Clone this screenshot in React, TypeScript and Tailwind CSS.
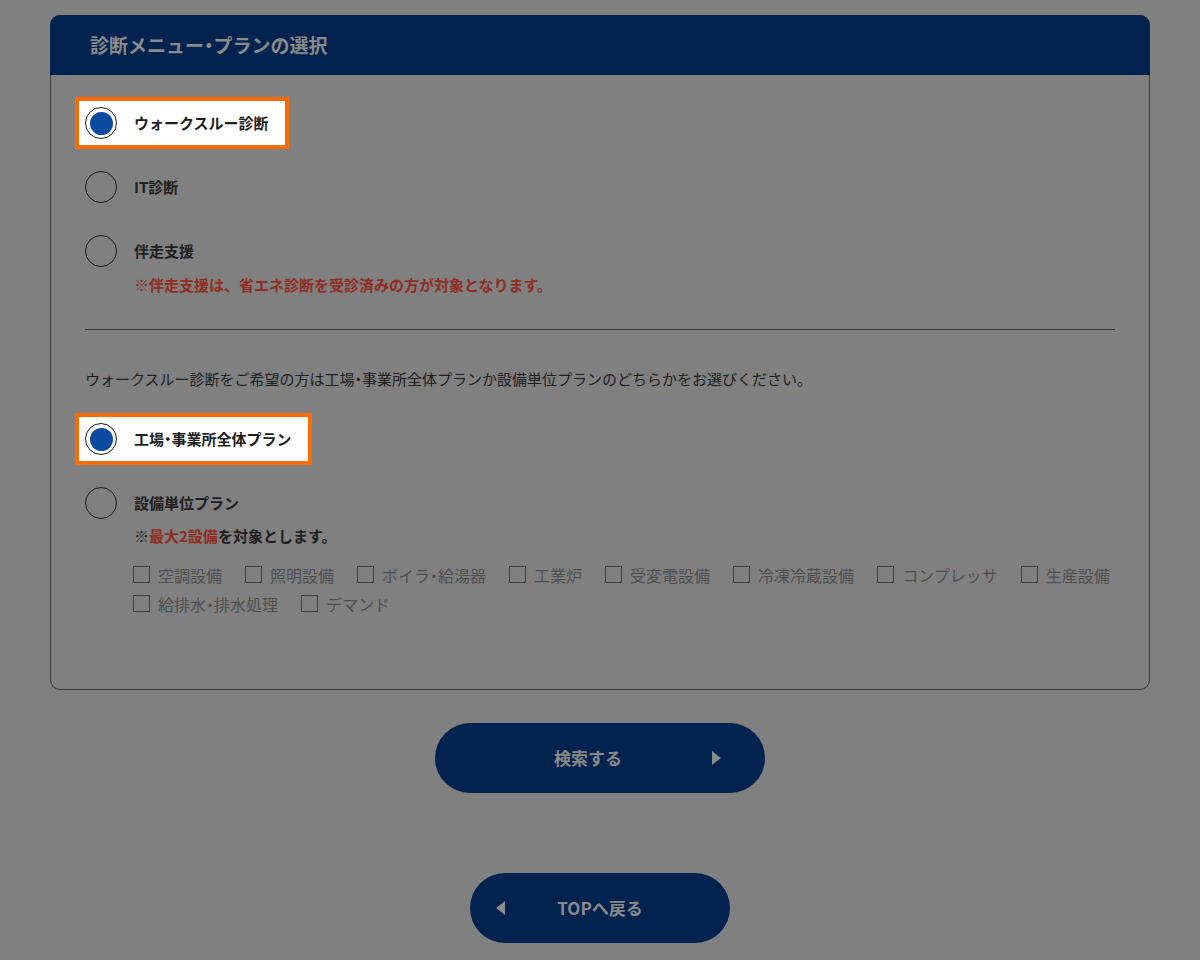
import React from "react";

const font = { fontFamily: '"Noto Sans CJK JP", "Noto Sans", sans-serif' };

// narrow middle dot like the original
function Dot() {
  return <span className="[font-feature-settings:'palt']">・</span>;
}

function Radio({ checked, highlight, children }: { checked?: boolean; highlight?: boolean; children: React.ReactNode }) {
  return (
    <div
      className={
        "flex h-[32px] w-fit items-center gap-[17px] pr-[10px] " +
        (highlight ? "bg-white shadow-[0_0_0_6px_#ffffff,0_0_0_10px_#ff6b00]" : "")
      }
    >
      <span className="flex h-[32px] w-[32px] items-center justify-center rounded-full border border-[#1c1c1c]">
        {checked && <span className="h-[23px] w-[23px] rounded-full bg-[#0a4aa0]" />}
      </span>
      <span className="text-[15px] font-bold text-[#1e1e1e]">{children}</span>
    </div>
  );
}

function Check({ label }: { label: React.ReactNode }) {
  return (
    <div className="flex h-[29px] items-center gap-[8px]">
      <span className="h-[17px] w-[17px] border border-[#3e3e3e]" />
      <span className="text-[16px] text-[#4e4e4e]">{label}</span>
    </div>
  );
}

export default function App() {
  const equipments: React.ReactNode[] = [
    "空調設備",
    "照明設備",
    <>ボイラ<Dot />給湯器</>,
    "工業炉",
    "受変電設備",
    "冷凍冷蔵設備",
    "コンプレッサ",
    "生産設備",
    <>給排水<Dot />排水処理</>,
    "デマンド",
  ];

  return (
    <div className="min-h-[960px] bg-[#808080] px-[50px] pt-[15px]" style={font}>
      {/* Card */}
      <div className="rounded-[10px] border border-[#3c3c3c]">
        <div className="-mx-px -mt-px flex h-[60px] items-center rounded-t-[10px] bg-[#02234f] pl-[40px]">
          <h2 className="text-[19px] font-bold text-[#8a8a8a]">
            診断メニュー<Dot />プランの選択
          </h2>
        </div>

        <div className="px-[34px] pt-[32px] pb-[71px]">
          <div className="flex flex-col gap-[32px]">
            <Radio checked highlight>ウォークスルー診断</Radio>
            <Radio>IT診断</Radio>
            <div>
              <Radio>伴走支援</Radio>
              <p className="mt-[7px] pl-[49px] text-[15px] font-bold leading-[22px] text-[#8f2d22]">
                ※伴走支援は、省エネ診断を受診済みの方が対象となります。
              </p>
            </div>
          </div>

          <hr className="mt-[33px] border-t border-[#3a3a3a]" />

          <p className="mt-[38px] text-[15px] leading-[22px] text-[#1e1e1e]">
            ウォークスルー診断をご希望の方は工場<Dot />事業所全体プランか設備単位プランのどちらかをお選びください。
          </p>

          <div className="mt-[33px] flex flex-col gap-[32px]">
            <Radio checked highlight>工場<Dot />事業所全体プラン</Radio>
            <div>
              <Radio>設備単位プラン</Radio>
              <p className="mt-[6px] pl-[49px] text-[15px] font-bold leading-[22px] text-[#1e1e1e]">
                ※<span className="text-[#8f2d22]">最大2設備</span>を対象とします。
              </p>
              <div className="mt-[13px] flex flex-wrap gap-x-[23px] pl-[48px]">
                {equipments.map((e, i) => (
                  <Check key={i} label={e} />
                ))}
              </div>
            </div>
          </div>
        </div>
      </div>

      {/* Buttons */}
      <div className="mt-[33px] flex flex-col items-center gap-[80px]">
        <button className="relative flex h-[70px] w-[330px] items-center justify-center rounded-full bg-[#02234f] pr-[24px]">
          <span className="text-[17px] font-bold text-[#8a8a8a]">検索する</span>
          <svg className="absolute right-[44px] top-1/2 -translate-y-1/2" width="9" height="14" viewBox="0 0 9 14">
            <path d="M0 0 L9 7 L0 14 Z" fill="#8a8a8a" />
          </svg>
        </button>

        <button className="relative flex h-[70px] w-[260px] items-center justify-center rounded-full bg-[#02234f]">
          <span className="text-[17px] font-bold text-[#8a8a8a]">TOPへ戻る</span>
          <svg className="absolute left-[26px] top-1/2 -translate-y-1/2" width="9" height="14" viewBox="0 0 9 14">
            <path d="M9 0 L0 7 L9 14 Z" fill="#8a8a8a" />
          </svg>
        </button>
      </div>
    </div>
  );
}
